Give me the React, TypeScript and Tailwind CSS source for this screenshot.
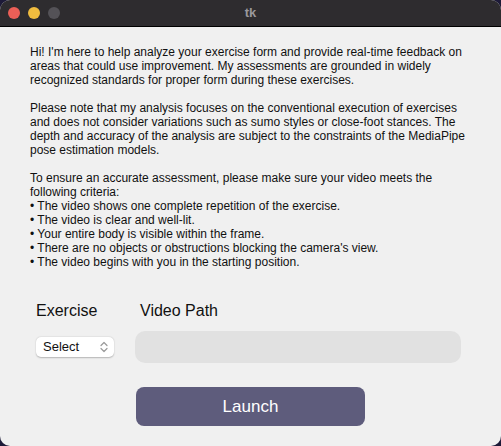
export default function App() {
  const criteria = [
    "The video shows one complete repetition of the exercise.",
    "The video is clear and well-lit.",
    "Your entire body is visible within the frame.",
    "There are no objects or obstructions blocking the camera's view.",
    "The video begins with you in the starting position.",
  ];

  return (
    <div className="w-[501px] h-[446px] bg-[#1d1a38] font-['Liberation_Sans',Arial,sans-serif]">
      <div className="w-full h-full rounded-[10px] overflow-hidden flex flex-col bg-[#f0f0f0]">
        {/* title bar */}
        <div className="relative h-[27px] shrink-0 bg-[#2e2c2f] border-b border-black flex items-center">
          <div className="flex gap-[8px] pl-[8px]">
            <span className="w-[12px] h-[12px] rounded-full bg-[#ec5f57]" />
            <span className="w-[12px] h-[12px] rounded-full bg-[#f0bc3f]" />
            <span className="w-[12px] h-[12px] rounded-full bg-[#545257]" />
          </div>
          <span className="absolute left-1/2 -translate-x-1/2 text-[13px] font-bold text-[#9a989c]">
            tk
          </span>
        </div>

        {/* intro text */}
        <div className="pl-[30px] pr-[20px] pt-[18px] text-[12px] leading-[14px] text-[#111]">
          <p>
            Hi! I'm here to help analyze your exercise form and provide real-time feedback on
            <br />
            areas that could use improvement. My assessments are grounded in widely
            <br />
            recognized standards for proper form during these exercises.
          </p>
          <p className="mt-[14px]">
            Please note that my analysis focuses on the conventional execution of exercises
            <br />
            and does not consider variations such as sumo styles or close-foot stances. The
            <br />
            depth and accuracy of the analysis are subject to the constraints of the MediaPipe
            <br />
            pose estimation models.
          </p>
          <p className="mt-[14px]">
            To ensure an accurate assessment, please make sure your video meets the
            <br />
            following criteria:
          </p>
          {criteria.map((c) => (
            <p key={c}>• {c}</p>
          ))}
        </div>

        {/* form */}
        <div className="flex pl-[36px] pt-[32px]">
          <div className="w-[99px] flex flex-col">
            <span className="text-[16px] leading-[20px] text-[#111]">Exercise</span>
            <div className="mt-[16px] w-[78px] h-[20px] rounded-[5px] bg-white shadow-[0_0.5px_1.5px_rgba(0,0,0,0.25)] flex items-center justify-between pl-[7px] pr-[6px]">
              <span className="text-[13px] text-[#111]">Select</span>
              <svg width="8" height="12" viewBox="0 0 8 12" fill="none" stroke="#9a9a9a" strokeWidth="1.2" strokeLinecap="round" strokeLinejoin="round">
                <path d="M1 4.5 L4 1.5 L7 4.5" />
                <path d="M1 7.5 L4 10.5 L7 7.5" />
              </svg>
            </div>
          </div>
          <div className="flex flex-col">
            <span className="pl-[5px] text-[16px] leading-[20px] text-[#111]">Video Path</span>
            <div className="mt-[10px] w-[326px] h-[32px] rounded-[10px] bg-[#e1e1e1]" />
          </div>
        </div>

        <div className="pl-[136px] pt-[24px]">
          <button className="w-[229px] h-[39px] rounded-[8px] bg-[#5e5c7c] text-white text-[17px]">
            Launch
          </button>
        </div>
      </div>
    </div>
  );
}
